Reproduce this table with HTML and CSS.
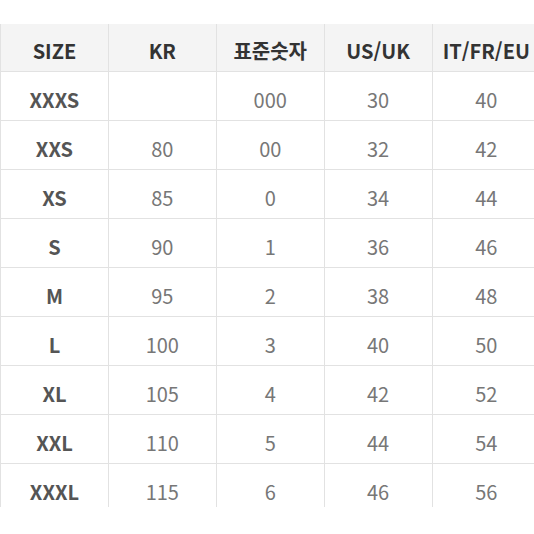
FILE: index.html
```html
<!DOCTYPE html>
<html lang="ko">
<head>
<meta charset="utf-8">
<link rel="stylesheet" href="styles.css">
</head>
<body>
<div class="wrap">
<table class="size-table">
<thead>
<tr><th>SIZE</th><th>KR</th><th>표준숫자</th><th>US/UK</th><th>IT/FR/EU</th></tr>
</thead>
<tbody>
<tr><th>XXXS</th><td></td><td>000</td><td>30</td><td>40</td></tr>
<tr><th>XXS</th><td>80</td><td>00</td><td>32</td><td>42</td></tr>
<tr><th>XS</th><td>85</td><td>0</td><td>34</td><td>44</td></tr>
<tr><th>S</th><td>90</td><td>1</td><td>36</td><td>46</td></tr>
<tr><th>M</th><td>95</td><td>2</td><td>38</td><td>48</td></tr>
<tr><th>L</th><td>100</td><td>3</td><td>40</td><td>50</td></tr>
<tr><th>XL</th><td>105</td><td>4</td><td>42</td><td>52</td></tr>
<tr><th>XXL</th><td>110</td><td>5</td><td>44</td><td>54</td></tr>
<tr><th>XXXL</th><td>115</td><td>6</td><td>46</td><td>56</td></tr>
</tbody>
</table>
</div>
</body>
</html>
```
FILE: styles.css
```css
html, body {
  margin: 0;
  padding: 0;
  background: #fff;
}
body {
  font-family: "Noto Sans CJK KR", "Noto Sans", sans-serif;
  padding-top: 24px;
}
.wrap {
  width: 534px;
  height: 483px;
  overflow: hidden;
}
.size-table {
  width: 540px;
  border-collapse: collapse;
  table-layout: fixed;
}
.size-table th,
.size-table td {
  border-left: 1px solid #e2e2e2;
  border-bottom: 1px solid #e2e2e2;
  text-align: center;
  vertical-align: middle;
  height: 48px;
  padding: 8px 0 0 0;
  box-sizing: border-box;
  font-size: 20px;
  line-height: 28px;
}
.size-table thead th {
  background: #f4f4f4;
  color: #333;
  font-weight: 700;
  height: 47px;
}
.size-table tbody th {
  color: #555;
  font-weight: 700;
}
.size-table tbody td {
  color: #777;
  font-weight: 400;
}
.size-table tbody tr {
  height: 49px;
}
```
